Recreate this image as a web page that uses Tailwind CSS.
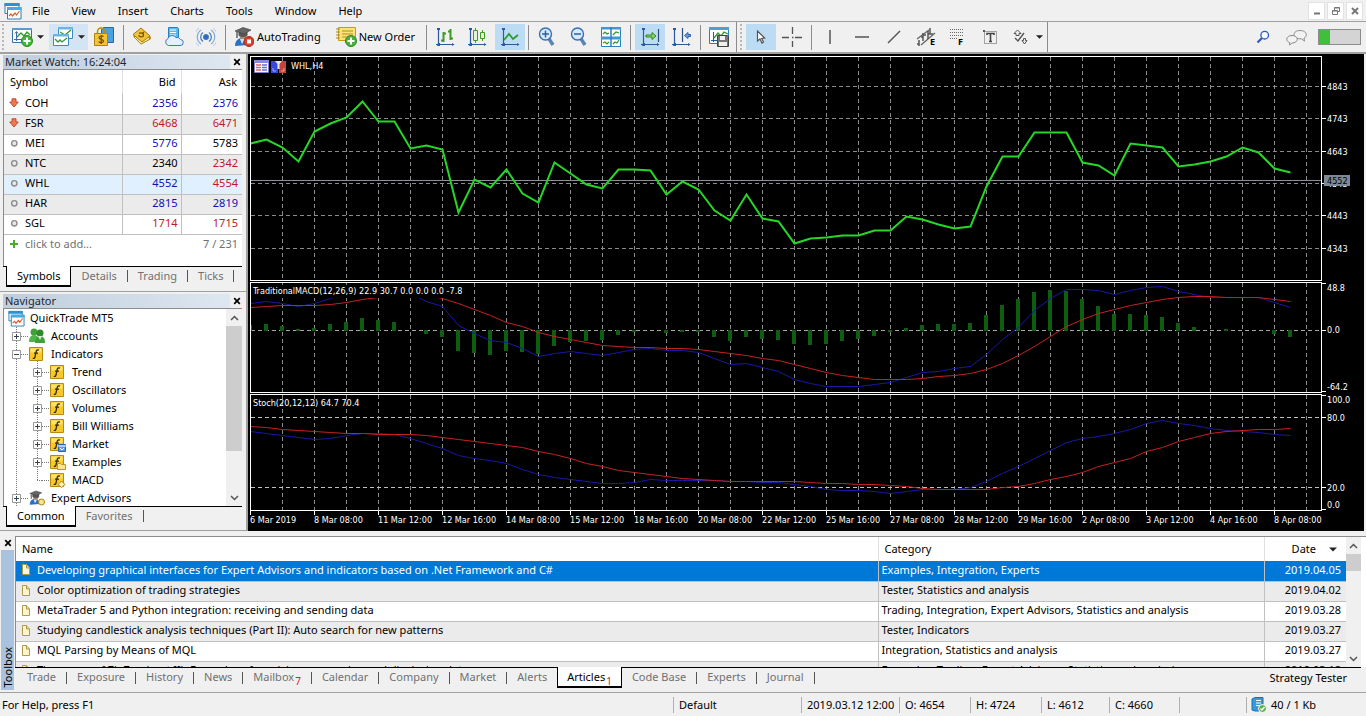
<!DOCTYPE html>
<html lang="en">
<head>
    <meta charset="UTF-8">
    <meta name="viewport" content="width=device-width, initial-scale=1.0">
    <title>QuickTrade MT5</title>
    <script src="https://cdn.jsdelivr.net/npm/@tailwindcss/browser@4"></script>
</head>
<body class="h-screen flex flex-col overflow-hidden bg-[#f0f0f0] text-black text-[11px] leading-4 font-['Noto_Sans','Open_Sans',sans-serif]">

    <!-- Shared icons -->
    <svg class="hidden">
        <symbol id="i-app" viewBox="0 0 18 18">
            <path d="M1 1.500h14v10H1z" fill="#fff" stroke="#2b7fb8"/><path d="M.5 1h15v3H.5z" fill="#2f8fd0"/>
            <path d="M3.500 5.500h13.500v11.500H3.500z" fill="#fff" stroke="#2b7fb8"/><path d="M3 5h14.500v3H3z" fill="#49a9e0"/>
            <path d="M5 14l2-2 1.500 2 2.500-3 1.500 2 3-4" fill="none" stroke="#e0582a" stroke-width="1.200"/>
        </symbol>
        <symbol id="i-f" viewBox="0 0 14 14">
            <path d="M.5.5h13v13H.5z" fill="#f6c928" stroke="#b58a12"/><path d="M1.500 1.500h11v4h-11z" fill="#fde36a"/>
            <path d="M10 3.200c-1.600-.8-2.600 0-2.900 1.600L6 10c-.3 1.400-1 1.700-2.200 1.200M5 6.200h4" fill="none" stroke="#3a2c00" stroke-width="1.300"/>
        </symbol>
        <symbol id="i-doc" viewBox="0 0 8 11">
            <path d="M.5.5h4L7.500 4v6.500h-7z" fill="#fdf6d0" stroke="#b09a4a"/><path d="M4.500.5V4h3" fill="#e9d68a" stroke="#b09a4a"/>
        </symbol>
        <symbol id="i-expert" viewBox="0 0 20 20">
            <path d="M1 19c0-5 3-8 7-8s6 3 6 7z" fill="#2b6fc0"/><path d="M6 12l2 5 3-5z" fill="#cfe6ff"/>
            <circle cx="9" cy="8.500" r="3.500" fill="#b08a68"/><path d="M4.500 4.500v4c3 2 6 2 9 0v-4z" fill="#555"/>
            <path d="M1 4l8-3.500L17 3l-7 4z" fill="#666" stroke="#3a3a3a" stroke-width=".6"/><path d="M3 5v6" stroke="#555" stroke-width="1.400"/>
        </symbol>
        <symbol id="i-down" viewBox="0 0 10 10"><path d="M3 .8h4v3.200h2.300L5 9 .7 4H3z" fill="#f07a50" stroke="#b8442a" stroke-width=".9"/></symbol>
        <symbol id="i-dot" viewBox="0 0 10 10"><circle cx="5.300" cy="5.300" r="2.700" fill="#e8e8e8" stroke="#8c8c8c" stroke-width="1.400"/></symbol>
        <symbol id="i-close" viewBox="0 0 8 8"><path d="M1.200 1.200l5.600 5.600M6.800 1.200L1.200 6.800" stroke="#000" stroke-width="1.700"/></symbol>
        <symbol id="i-caret" viewBox="0 0 8 4"><path d="M0 0h8L4 4z" fill="#222"/></symbol>
        <symbol id="i-axes" viewBox="0 0 20 20"><path d="M3.500 2v16M1 17.500h17" stroke="#2c5aa0" stroke-width="1.200" fill="none"/><path d="M2 1h3v2H2zM17 16l2.500 1.500L17 19zM3 16h2v3H2z" fill="#2c5aa0"/></symbol>
    </svg>

    <!-- Menu -->
    <header class="flex h-[22px] shrink-0 items-center border-b border-[#a0a0a0] pl-1">
        <svg class="size-[18px]"><use href="#i-app"/></svg>
        <nav class="flex flex-1 gap-[22px] pl-[10px]">
            <button>File</button>
            <button>View</button>
            <button>Insert</button>
            <button>Charts</button>
            <button>Tools</button>
            <button>Window</button>
            <button>Help</button>
        </nav>
        <div class="flex gap-[2px] pr-[3px]">
            <button aria-label="Minimize" class="flex h-[18px] w-[17px] items-center justify-center border border-[#e2e2e2] bg-white"><svg width="12" height="12"><path d="M3 8.500h6" stroke="#777" stroke-width="2"/></svg></button>
            <button aria-label="Restore" class="flex h-[18px] w-[17px] items-center justify-center border border-[#e2e2e2] bg-white"><svg width="12" height="12" fill="none" stroke="#777"><path d="M4.500 5V2.500h5v4H8M2.500 5.500h5v4h-5zM4.500 3h5M2.500 6h5"/></svg></button>
            <button aria-label="Close" class="flex h-[18px] w-[17px] items-center justify-center border border-[#e2e2e2] bg-white"><svg width="12" height="12"><path d="M3 3l6 6M9 3L3 9" stroke="#777" stroke-width="2"/></svg></button>
        </div>
    </header>

    <!-- Toolbar -->
    <div class="flex h-8 shrink-0 items-center border-b-2 border-[#a0a0a0]">
        <div class="ml-[2px] h-[26px] border-l-2 border-dotted border-[#b8b8b8]"></div>
        <button aria-label="New chart" class="ml-2 flex items-center gap-1">
            <svg width="21" height="20" viewBox="0 0 21 20"><path d="M.5 1.500h19v14H.5z" fill="#fff" stroke="#3a6ea8"/><path d="M0 1h20v2H0z" fill="#5b9bd0"/><path d="M4.500 5v9M2 12.500h14M3 6.500l1.500-2L6 6.500" fill="none" stroke="#3a6ea8"/><path d="M5 10l4-4 3 3 3-4 3 3" fill="none" stroke="#2e9a2e" stroke-width="1.300"/><circle cx="15" cy="14" r="5.500" fill="#49b13c" stroke="#2c8a24"/><path d="M15 10.500v7M11.500 14h7" stroke="#fff" stroke-width="2"/></svg>
            <svg class="h-1 w-[7px]"><use href="#i-caret"/></svg>
        </button>
        <button aria-label="Profiles" class="ml-[5px] flex h-[26px] w-[39px] items-center justify-center gap-1 bg-[#d3e5f5]">
            <svg width="21" height="20" viewBox="0 0 21 20"><path d="M5.500.5h14v11h-14z" fill="#fff" stroke="#3a8ac0"/><path d="M5 0h15v2.500H5z" fill="#6db4e4"/><path d="M7 5l5 3 6-5" fill="none" stroke="#2e9a2e" stroke-width="1.300"/><path d="M.5 7.500h15v11H.5z" fill="#fff" stroke="#3a8ac0"/><path d="M0 7h16v2.500H0z" fill="#6db4e4"/><path d="M2 12l3 3 2-2 2 2 5-4" fill="none" stroke="#2e9a2e" stroke-width="1.300"/></svg>
            <svg class="h-1 w-[7px]"><use href="#i-caret"/></svg>
        </button>
        <button aria-label="Market" class="ml-[6px]"><svg width="20" height="20" viewBox="0 0 20 20"><path d="M7.500 2.500l2-2h10v15h-12z" fill="#4d9fe0" stroke="#2268a8"/><path d="M3.500 7V4.500a3.500 3.500 0 017 0V7" fill="none" stroke="#b58a12" stroke-width="1.500"/><path d="M.5 6.500h13v12H.5z" fill="#f3c52f" stroke="#b0820e"/><path d="M9.500 9.700C8.500 8.600 5 8.600 5 10.700c0 2 4.600 1.200 4.600 3.400 0 2-3.900 2-5 .6M7.200 8v9" fill="none" stroke="#7a4a00" stroke-width="1.200"/></svg></button>
        <div class="ml-[9px] h-[25px] border-l border-[#8c8c8c]"></div>
        <button aria-label="MetaEditor" class="ml-2"><svg width="20" height="20" viewBox="0 0 20 20"><path d="M1 9l8 8.500 10-5.500v-2L10 2z" fill="#c18c12"/><path d="M2 10l7 7 9-5-7-7z" fill="#fff3b5" stroke="#a67a10" stroke-width=".8"/><path d="M1 7.500L9 1l9 8-8 6z" fill="#f0c33a" stroke="#a67a10"/><path d="M7 6.500c2-1.500 5 0 4.500 2S8 10 6.500 8.500M11 5l1 1" fill="none" stroke="#7a5200" stroke-width="1.300"/></svg></button>
        <button aria-label="Virtual hosting" class="ml-3"><svg width="20" height="20" viewBox="0 0 20 20"><path d="M4.500.5h9l1 1v13h-10z" fill="#5ab8ea" stroke="#2a80b8"/><path d="M6 3h6M6 5.500h6M6 8h6" stroke="#fff"/><path d="M4.500 18.500a3.700 3.700 0 01-.5-7 4.500 4.500 0 018-1 4 4 0 014.500 2 3 3 0 01-.5 6z" fill="#e6f1fd" stroke="#3a76c4"/></svg></button>
        <button aria-label="Signals" class="ml-3"><svg width="20" height="20" viewBox="0 0 20 20" fill="none" stroke="#4a80bc"><circle cx="10" cy="10" r="2.600" fill="#2a6ac8"/><path d="M7 5.500a5.500 5.500 0 000 9M13 5.500a5.500 5.500 0 010 9" stroke-width="1.300"/><path d="M5 3a8.500 8.500 0 000 14M15 3a8.500 8.500 0 010 14" stroke="#83aad6" stroke-width="1.200"/><path d="M3 1a11 11 0 000 18M17 1a11 11 0 010 18" stroke="#b3cae6"/></svg></button>
        <div class="ml-[9px] h-[25px] border-l border-[#8c8c8c]"></div>
        <button class="ml-2 flex items-center gap-[3px]">
            <svg width="20" height="20" viewBox="0 0 20 20"><use href="#i-expert"/><circle cx="15" cy="14.500" r="5" fill="#d8402a" stroke="#a82a18"/><path d="M13 12.500h4v4h-4z" fill="#fff"/></svg>
            AutoTrading
        </button>
        <button class="ml-[15px] flex items-center gap-[2px]">
            <svg width="21" height="20" viewBox="0 0 21 20"><path d="M2.500.5h17v13h-17z" fill="#ffe37a" stroke="#c69a1c"/><path d="M0 2h4M0 5h4M0 8h4M0 11h4" stroke="#a8883a"/><path d="M6 4h11M6 7h11M6 10h8" stroke="#b08a20"/><circle cx="15" cy="14" r="5.500" fill="#49b13c" stroke="#2c8a24"/><path d="M15 10.500v7M11.500 14h7" stroke="#fff" stroke-width="2"/></svg>
            New Order
        </button>
        <div class="ml-[11px] h-[25px] border-l border-[#8c8c8c]"></div>
        <button aria-label="Bar chart" class="ml-2"><svg width="20" height="20"><use href="#i-axes"/><path d="M8.500 5v10M6 13.500h3M8 6.500h3M15.500 2v11M13 4.500h3M15 11.500h3" stroke="#3f9a20" stroke-width="2"/></svg></button>
        <button aria-label="Candlesticks" class="ml-3"><svg width="20" height="20"><use href="#i-axes"/><path d="M8.500 1v15M15.500 3v11" stroke="#3f9a20"/><path d="M6.500 3.500h4v10h-4zM13.500 5.500h4v6h-4z" fill="#e6f6dc" stroke="#3f9a20"/></svg></button>
        <button aria-label="Line chart" class="ml-2 flex h-[26px] w-[30px] items-center justify-center bg-[#bcdcf4]"><svg width="20" height="20"><use href="#i-axes"/><path d="M4 13l5-6 4 5 5-4" fill="none" stroke="#2e9a2e" stroke-width="1.800"/></svg></button>
        <div class="ml-[3px] h-[25px] border-l border-[#8c8c8c]"></div>
        <button aria-label="Zoom in" class="ml-[9px]"><svg width="20" height="20"><path d="M10.500 11l4.500 7" stroke="#5c82b4" stroke-width="3.400"/><circle cx="7.500" cy="7" r="6" fill="#d9ebfa" stroke="#3570b8" stroke-width="1.400"/><path d="M4 7h7M7.500 3.500v7" stroke="#2860a8" stroke-width="1.500"/></svg></button>
        <button aria-label="Zoom out" class="ml-3"><svg width="20" height="20"><path d="M10.500 11l4.500 7" stroke="#5c82b4" stroke-width="3.400"/><circle cx="7.500" cy="7" r="6" fill="#d9ebfa" stroke="#3570b8" stroke-width="1.400"/><path d="M4 7h7" stroke="#2860a8" stroke-width="1.500"/></svg></button>
        <button aria-label="Tile windows" class="ml-[11px]"><svg width="20" height="20"><path d="M.5.5h19v19H.5z" fill="#fff" stroke="#2a80c0"/><path d="M0 0h20v2.500H0zM0 9.500h20v3H0z" fill="#3f97d8"/><path d="M10 0v20" stroke="#2a80c0" stroke-width="1.500"/><path d="M2 7l2-2 2 2 2-1M12 8l3-3 3 1M2 16l2-1 2 2 2-2M12 17l2-2 2 1 2-3" fill="none" stroke="#2e9a2e" stroke-width="1.200"/></svg></button>
        <div class="ml-[9px] h-[25px] border-l border-[#8c8c8c]"></div>
        <button aria-label="Auto scroll" class="ml-1 flex h-[26px] w-[30px] items-center justify-center bg-[#bcdcf4]"><svg width="20" height="20"><use href="#i-axes"/><path d="M18.500 2v13" stroke="#2c4a7a" stroke-width="1.200"/><path d="M6 8h6V5.500l4 3.500-4 3.500V10H6z" fill="#8fd06a" stroke="#2e8a1e"/></svg></button>
        <button aria-label="Chart shift" class="ml-[6px]"><svg width="20" height="20"><use href="#i-axes"/><path d="M11.500 1v14" stroke="#2c4a7a" stroke-width="1.200"/><path d="M19.500 7.500h-2.500V5.500L13.500 8.500l3.500 3v-2h2.500z" fill="#6aa0e8" stroke="#2a60b0"/></svg></button>
        <div class="ml-[9px] h-[25px] border-l border-[#8c8c8c]"></div>
        <button aria-label="Templates" class="ml-2"><svg width="20" height="20"><path d="M.5.5h19v16H.5z" fill="#fff" stroke="#2a80b8"/><path d="M0 0h20v3H0z" fill="#4aa0d8"/><path d="M4.500 5v10M2 13.500h8" stroke="#2c5aa0"/><path d="M5 11l4-5 3 3 3-4 4 2" fill="none" stroke="#2e9a2e" stroke-width="1.300"/><path d="M8.500 8.500h10l1 1v10h-11z" fill="#777" stroke="#444"/><path d="M11 9h5v4h-5zM10 15h8v4h-8z" fill="#f0f0f0"/></svg></button>
        <div class="ml-[7px] h-[30px] border-l border-[#8c8c8c]"></div>
        <div class="ml-[3px] h-[26px] border-l-2 border-dotted border-[#b8b8b8]"></div>
        <button aria-label="Cursor" class="ml-1 flex h-[26px] w-[30px] items-center justify-center bg-[#bcdcf4]"><svg width="10" height="14"><path d="M1.500 1v10l2.500-2 2 4 1.500-1-1.800-3.500 3-.5z" fill="#fff" stroke="#555" stroke-width="1.200"/></svg></button>
        <button aria-label="Crosshair" class="ml-[6px]"><svg width="20" height="20"><path d="M10.500 0v7M10.500 14v6M0 10.500h7M13 10.500h7M10 10.500h1.500" stroke="#555" stroke-width="1.300"/></svg></button>
        <div class="ml-[9px] h-[25px] border-l border-[#8c8c8c]"></div>
        <button aria-label="Vertical line" class="ml-2"><svg width="20" height="20"><path d="M10 3v14" stroke="#555" stroke-width="1.500"/></svg></button>
        <button aria-label="Horizontal line" class="ml-3"><svg width="20" height="20"><path d="M3 10h14" stroke="#555" stroke-width="1.500"/></svg></button>
        <button aria-label="Trendline" class="ml-3"><svg width="20" height="20"><path d="M4 16L16 4" stroke="#555" stroke-width="1.500"/></svg></button>
        <button aria-label="Equidistant channel" class="ml-3"><svg width="22" height="22"><path d="M1 13L13 4M5 19L19 7" stroke="#666" stroke-width="1.300"/><path d="M3 20v-6M1 18h2M7 15V7M5 11h2M7 9h3M12 13V5M14 2v6M12 8h5" stroke="#555" stroke-width="1.500"/><path d="M14 12h7v8h-7z" fill="#f0f0f0"/><text x="14" y="19" class="text-[9px] font-bold">E</text></svg></button>
        <button aria-label="Fibonacci" class="ml-[10px]"><svg width="20" height="22"><path d="M2 3.500h13M2 6.500h13M2 9.500h13M2 12.500h7" stroke="#666" stroke-dasharray="1 1" stroke-width="1.200"/><text x="10" y="19" class="text-[9px] font-bold">F</text></svg></button>
        <button aria-label="Text label" class="ml-3"><svg width="20" height="20"><path d="M4.500 4.500h12v12h-12z" fill="none" stroke="#555" stroke-dasharray="1 1"/><path d="M3 3h2v2H3z" fill="#555"/><path d="M7 8V6.500h7V8M10.500 6.500v8M9 14.500h3" fill="none" stroke="#444" stroke-width="1.600"/></svg></button>
        <button aria-label="Objects" class="ml-3 flex items-center gap-[6px]">
            <svg width="18" height="20"><path d="M2 6.500L5.500 3 9 6.500H7v2H4v-2z" fill="none" stroke="#555"/><path d="M3 11l3 3 6-8" fill="none" stroke="#555" stroke-width="1.400"/><path d="M10 13.500h1.500v-2h2v2H15L12.500 17z" fill="none" stroke="#555"/></svg>
            <svg class="h-1 w-[7px]"><use href="#i-caret"/></svg>
        </button>
        <div class="ml-1 h-[30px] border-l border-[#8c8c8c]"></div>
        <div class="ml-auto flex items-center pr-[5px]">
            <button aria-label="Search"><svg width="14" height="14"><path d="M6 8l-4.500 4.500" stroke="#2a5ac0" stroke-width="2.200"/><circle cx="8.700" cy="5.200" r="3.800" fill="#f4f9ff" stroke="#2a5ac0" stroke-width="1.300"/></svg></button>
            <button aria-label="Chat" class="ml-4"><svg width="21" height="17" fill="#f2f2f2" stroke="#8a8a8a"><path d="M14 1.500c3.500 0 6.300 1.700 6.300 4.200 0 1.600-1 2.700-2.300 3.400l.5 3-3-2.300C11 10 8 8.500 8 5.700c0-2.500 2.500-4.200 6-4.200z"/><path d="M6 6.500c3 0 5.300 1.500 5.300 3.700S9 14 6 14l-2.500 2 .2-2.500C2 13 .8 11.800.8 10.200.800 8 3 6.500 6 6.500z"/></svg></button>
            <div class="ml-[11px] h-4 w-[43px] border border-[#8c8c8c] bg-[#d4d4d4]"><div class="h-full w-[11px] bg-[#3fbf3a]"></div></div>
        </div>
    </div>

    <main class="flex min-h-0 flex-1">
        <aside class="flex w-[248px] shrink-0 flex-col border-r-2 border-[#a0a0a0] border-b border-b-[#a0a0a0]">
            <!-- Market Watch -->
            <section class="h-[238px] border-b border-[#a0a0a0] pt-px pr-1 pl-[3px]">
                <div class="-mr-[2px] flex h-[14px] items-center bg-linear-to-r from-[#bfcddb] to-[#dfe9f3] pl-[2px]">
                    <h2 class="flex-1 text-[#1c2733]">Market Watch: 16:24:04</h2>
                    <button aria-label="Close Market Watch" class="flex h-full w-[14px] items-center justify-center bg-[#f0f0f0]"><svg class="size-2"><use href="#i-close"/></svg></button>
                </div>
                <div class="h-[197px] border-t border-l border-[#8c8c8c] bg-white">
                    <table class="w-full table-fixed border-collapse">
                        <thead>
                            <tr class="h-6">
                                <th class="pl-[6px] text-left font-normal">Symbol</th>
                                <th class="w-[59px] border-l border-[#e0e0e0] pr-[5px] text-right font-normal">Bid</th>
                                <th class="w-[61px] border-l border-[#e0e0e0] pr-[5px] text-right font-normal">Ask</th>
                            </tr>
                        </thead>
                        <tbody id="quotes"></tbody>
                    </table>
                    <div class="flex h-5 items-center pr-[4px] pb-[2px] pl-[5px] text-[#707070]">
                        <svg width="10" height="10"><path d="M5 1v8M1 5h8" stroke="#4aa82a" stroke-width="2"/></svg>
                        <input type="text" aria-label="Add symbol" placeholder="click to add..." class="ml-[6px] w-24 flex-1 outline-none placeholder:text-[#707070]">
                        <span>7 / 231</span>
                    </div>
                </div>
                <div class="flex h-5 items-start border-t border-black pl-[3px] text-[#707070]">
                    <button class="-mt-px h-[21px] border-x border-b-2 border-black bg-white px-[10px] text-black">Symbols</button>
                    <button class="mt-px px-[10px]">Details</button><i class="mt-[3px] h-3 border-l border-[#555]"></i>
                    <button class="mt-px px-[10px]">Trading</button><i class="mt-[3px] h-3 border-l border-[#555]"></i>
                    <button class="mt-px px-[10px]">Ticks</button><i class="mt-[3px] h-3 border-l border-[#555]"></i>
                </div>
            </section>

            <!-- Navigator -->
            <section class="flex min-h-0 flex-1 flex-col pt-[2px] pr-1 pl-[3px]">
                <div class="-mr-[2px] flex h-[14px] shrink-0 items-center bg-linear-to-r from-[#bfcddb] to-[#dfe9f3] pl-[2px]">
                    <h2 class="flex-1 text-[#1c2733]">Navigator</h2>
                    <button aria-label="Close Navigator" class="flex h-full w-[14px] items-center justify-center bg-[#f0f0f0]"><svg class="size-2"><use href="#i-close"/></svg></button>
                </div>
                <div class="flex min-h-0 flex-1 border-t border-l border-[#8c8c8c] bg-white">
                    <ul class="relative flex-1 overflow-hidden" id="tree">
                        <li class="absolute top-4 bottom-0 left-3 border-l border-dotted border-[#777]"></li>
                        <li class="absolute top-[50px] left-[33px] h-[121px] border-l border-dotted border-[#777]"></li>
                        <li class="relative flex h-[18px] items-center gap-[5px] pl-1"><svg class="size-[17px]"><use href="#i-app"/></svg>QuickTrade MT5</li>
                    </ul>
                    <div class="flex w-4 flex-col bg-[#f0f0f0]">
                        <button aria-label="Scroll up" class="flex h-[17px] items-center justify-center"><svg width="9" height="6"><path d="M1 5l3.500-3.500L8 5" fill="none" stroke="#555" stroke-width="1.500"/></svg></button>
                        <div class="h-[125px] bg-[#cdcdcd]"></div>
                        <button aria-label="Scroll down" class="mt-auto flex h-[17px] items-center justify-center"><svg width="9" height="6"><path d="M1 1l3.500 3.500L8 1" fill="none" stroke="#555" stroke-width="1.500"/></svg></button>
                    </div>
                </div>
                <div class="flex h-6 shrink-0 items-start border-t border-black pl-[3px] text-[#707070]">
                    <button class="-mt-px h-[21px] border-x border-b-2 border-black bg-white px-[10px] text-black">Common</button>
                    <button class="mt-px px-[10px]">Favorites</button><i class="mt-[3px] h-3 border-l border-[#555]"></i>
                </div>
            </section>
        </aside>

        <!-- Chart window -->
        <section class="flex min-w-0 flex-1 flex-col gap-px bg-black pt-[2px] pl-[2px] font-['DejaVu_Sans_Condensed','DejaVu_Sans',sans-serif] text-[9px] text-white">
            <div class="flex min-h-0 flex-1">
                <div class="relative min-w-0 flex-1 border border-white">
                    <svg id="price" class="block h-full w-full"></svg>
                    <div class="absolute top-px left-[3px] flex items-center gap-[2px]">
                        <svg width="15" height="13"><path d="M.5.5h14v12H.5z" fill="#fff" stroke="#8080d0"/><path d="M0 0h15v3H0z" fill="#8a8ae0"/><path d="M2 5h5M2 7.500h5M2 10h5" stroke="#e06a5a" stroke-width="1.400"/><path d="M8 5h5M8 7.500h5M8 10h5" stroke="#6a6ae0" stroke-width="1.400"/></svg>
                        <svg width="15" height="13"><path d="M0 1h5l2 3v9H0z" fill="#3a48e0"/><path d="M8 4l2-3h5v12H8z" fill="#c8423c"/><path d="M4 1h7L8.500 4v5h-2V4z" fill="#e8e8f4"/><path d="M2 8v3h3M13 8v3h-3" stroke="#fff" stroke-opacity=".5" fill="none"/></svg>
                        <span class="ml-[3px]">WHL,H4</span>
                    </div>
                </div>
                <svg id="priceAxis" class="h-full w-[42px] shrink-0"></svg>
            </div>
            <div class="flex h-[111px] shrink-0">
                <div class="relative min-w-0 flex-1 border border-white">
                    <svg id="macd" class="block h-full w-full"></svg>
                    <span class="absolute top-[2px] left-[2px] bg-black pr-1 leading-[13px]">TraditionalMACD(12,26,9) 22.9 30.7 0.0 0.0 0.0 -7.8</span>
                </div>
                <svg id="macdAxis" class="h-full w-[42px] shrink-0"></svg>
            </div>
            <div class="flex h-[117px] shrink-0">
                <div class="relative min-w-0 flex-1 border border-white">
                    <svg id="stoch" class="block h-full w-full"></svg>
                    <span class="absolute top-[2px] left-[2px] leading-[13px]">Stoch(20,12,12) 64.7 70.4</span>
                </div>
                <svg id="stochAxis" class="h-full w-[42px] shrink-0"></svg>
            </div>
            <div id="times" class="-mt-px flex h-5 shrink-0 leading-[10px]"></div>
        </section>
        <div class="w-[2px] shrink-0 bg-[#f0f0f0]"></div>
    </main>

    <!-- Toolbox -->
    <section class="flex h-[161px] shrink-0 pt-[5px]">
        <div class="flex w-[15px] shrink-0 flex-col items-center">
            <button aria-label="Close Toolbox" class="flex h-[14px] items-center"><svg class="size-2"><use href="#i-close"/></svg></button>
            <div class="mb-[2px] w-[13px] flex-1 bg-[#a9c2de] pb-[2px] text-left leading-[13px] [writing-mode:sideways-lr]">Toolbox</div>
        </div>
        <div class="min-w-0 flex-1">
            <div class="flex h-[131px] border-t border-l border-[#8c8c8c] bg-white">
                <div class="min-w-0 flex-1 overflow-hidden">
                    <table class="w-full table-fixed border-collapse">
                        <thead>
                            <tr class="h-6">
                                <th class="pl-[6px] text-left font-normal">Name</th>
                                <th class="w-[386px] border-l border-[#e0e0e0] pl-[6px] text-left font-normal">Category</th>
                                <th class="w-[82px] border-l border-[#e0e0e0] pr-[9px] font-normal"><span class="flex items-center justify-end gap-[13px]">Date <svg class="h-[5px] w-2"><use href="#i-caret"/></svg></span></th>
                            </tr>
                        </thead>
                        <tbody id="articles"></tbody>
                    </table>
                </div>
                <div class="mr-[5px] flex w-[15px] flex-col bg-[#f0f0f0]">
                    <button aria-label="Scroll up" class="flex h-[17px] items-center justify-center"><svg width="9" height="6"><path d="M1 5l3.500-3.500L8 5" fill="none" stroke="#555" stroke-width="1.500"/></svg></button>
                    <div class="h-[17px] bg-[#cdcdcd]"></div>
                    <button aria-label="Scroll down" class="mt-auto flex h-[17px] items-center justify-center"><svg width="9" height="6"><path d="M1 1l3.500 3.500L8 1" fill="none" stroke="#555" stroke-width="1.500"/></svg></button>
                </div>
            </div>
            <div class="mr-[5px] flex h-[22px] items-start border-t border-black pl-[2px] text-[#707070]">
                <button class="mt-px px-[10px]">Trade</button><i class="mt-1 h-3 border-l border-[#555]"></i>
                <button class="mt-px px-[10px]">Exposure</button><i class="mt-1 h-3 border-l border-[#555]"></i>
                <button class="mt-px px-[10px]">History</button><i class="mt-1 h-3 border-l border-[#555]"></i>
                <button class="mt-px px-[10px]">News</button><i class="mt-1 h-3 border-l border-[#555]"></i>
                <button class="mt-px flex px-[10px]">Mailbox<span class="ml-px pt-1 text-[10px] text-[#d02030]">7</span></button><i class="mt-1 h-3 border-l border-[#555]"></i>
                <button class="mt-px px-[10px]">Calendar</button><i class="mt-1 h-3 border-l border-[#555]"></i>
                <button class="mt-px px-[10px]">Company</button><i class="mt-1 h-3 border-l border-[#555]"></i>
                <button class="mt-px px-[10px]">Market</button><i class="mt-1 h-3 border-l border-[#555]"></i>
                <button class="mt-px px-[10px]">Alerts</button>
                <button class="-mt-px flex h-[21px] border-x border-b-2 border-black bg-white px-[9px] pt-[2px] text-black">Articles<span class="ml-px pt-1 text-[10px] text-[#d02030]">1</span></button>
                <button class="mt-px px-[10px]">Code Base</button><i class="mt-1 h-3 border-l border-[#555]"></i>
                <button class="mt-px px-[10px]">Experts</button><i class="mt-1 h-3 border-l border-[#555]"></i>
                <button class="mt-px px-[10px]">Journal</button><i class="mt-1 h-3 border-l border-[#555]"></i>
                <button class="mt-[2px] mr-[14px] ml-auto text-black">Strategy Tester</button>
            </div>
        </div>
    </section>

    <!-- Status bar -->
    <footer class="flex h-6 shrink-0 items-center border-t border-[#a0a0a0] pt-px pl-[2px]">
        <span class="flex-1">For Help, press F1</span>
        <span class="w-32 border-l border-[#b0b0b0] pl-[5px]">Default</span>
        <span class="w-[98px] border-l border-[#b0b0b0] pl-[5px] whitespace-nowrap">2019.03.12 12:00</span>
        <span class="w-[71px] border-l border-[#b0b0b0] pl-[5px]">O: 4654</span>
        <span class="w-[71px] border-l border-[#b0b0b0] pl-[5px]">H: 4724</span>
        <span class="w-[68px] border-l border-[#b0b0b0] pl-[5px]">L: 4612</span>
        <span class="w-[70px] border-l border-[#b0b0b0] pl-[5px]">C: 4660</span>
        <span class="h-4 w-[67px] border-l border-[#b0b0b0]"></span>
        <span class="flex w-[120px] items-center gap-1 border-l border-[#b0b0b0] pl-1">
            <svg width="16" height="16"><path d="M1 2l3-1.500h8V14H4l-3-1z" fill="#3a9ad8" stroke="#1c6ca8"/><path d="M5 3.500h5M5 6h5M5 8.500h5" stroke="#fff"/><circle cx="11.500" cy="11.500" r="4" fill="#5cb04a" stroke="#fff"/><path d="M9.500 11.500l1.500 1.500 2.500-3" fill="none" stroke="#fff" stroke-width="1.300"/></svg>
            40 / 1 Kb
        </span>
    </footer>

    <script>
        const blue = 'text-[#1010b8]', red = 'text-[#c01828]', black = 'text-black';
        const quotes = [
            ['COH', 'down', 2356, blue, 2376, blue],
            ['FSR', 'down', 6468, red, 6471, red],
            ['MEI', 'dot', 5776, blue, 5783, black],
            ['NTC', 'dot', 2340, black, 2342, red],
            ['WHL', 'dot', 4552, blue, 4554, red],
            ['HAR', 'dot', 2815, blue, 2819, blue],
            ['SGL', 'dot', 1714, red, 1715, red],
        ];
        document.getElementById('quotes').innerHTML = quotes.map(([name, icon, bid, bidColor, ask, askColor], i) => {
            const bg = name === 'WHL' ? 'bg-[#e0f0ff]' : i % 2 ? 'bg-[#ebebeb]' : 'bg-white';
            return `<tr class="h-5 border-b border-[#c0c0c0] ${bg}">
                <td class="pb-[2px] pl-[5px]"><span class="flex items-center gap-[6px]"><svg class="size-[10px]"><use href="#i-${icon}"/></svg>${name}</span></td>
                <td class="border-l border-[#c0c0c0] pr-[3px] pb-[2px] text-right ${bidColor}">${bid}</td>
                <td class="border-l border-[#c0c0c0] pr-[4px] pb-[2px] text-right ${askColor}">${ask}</td>
            </tr>`;
        }).join('');

        const articles = [
            ['Developing graphical interfaces for Expert Advisors and indicators based on .Net Framework and C#', 'Examples, Integration, Experts', '2019.04.05'],
            ['Color optimization of trading strategies', 'Tester, Statistics and analysis', '2019.04.02'],
            ['MetaTrader 5 and Python integration: receiving and sending data', 'Trading, Integration, Expert Advisors, Statistics and analysis', '2019.03.28'],
            ['Studying candlestick analysis techniques (Part II): Auto search for new patterns', 'Tester, Indicators', '2019.03.27'],
            ['MQL Parsing by Means of MQL', 'Integration, Statistics and analysis', '2019.03.27'],
            ['The power of ZigZag (part II). Examples of receiving, processing and displaying data', 'Examples, Trading, Expert Advisors, Statistics and analysis', '2019.03.18'],
        ];
        document.getElementById('articles').innerHTML = articles.map(([name, category, date], i) => {
            const bg = i === 0 ? 'bg-[#0078d7] text-white' : i % 2 ? 'bg-[#ebebeb]' : 'bg-white';
            return `<tr class="h-5 border-b border-[#c0c0c0] whitespace-nowrap ${bg}">
                <td class="pb-[2px] pl-[6px]"><span class="flex items-center gap-[7px]"><svg class="h-[11px] w-2"><use href="#i-doc"/></svg>${name}</span></td>
                <td class="border-l border-[#c0c0c0] pb-[2px] pl-[3px]">${category}</td>
                <td class="border-l border-[#c0c0c0] pr-[5px] pb-[2px] text-right">${date}</td>
            </tr>`;
        }).join('');

        // Navigator tree
        const f = '<use href="#i-f" width="14" height="14" y="1"/>';
        const icons = {
            accounts: '<circle cx="5" cy="4" r="3.500" fill="#3fa03a"/><path d="M0 14c0-5 2-7 5-7s5 2 5 7z" fill="#4fb548"/><circle cx="11" cy="5" r="3.500" fill="#2e8a2a"/><path d="M6 15c0-5 2-7 5-7s5 2 5 7z" fill="#3fa03a"/><path d="M9 8l2 4 2-4" fill="#d8f0d0"/>',
            f: f,
            market: f + '<path d="M8.500 8.500h7v7h-7z" fill="#5a9ce8" stroke="#2a60b0"/><path d="M8 10h8M10 12l2 2 2-2" stroke="#fff" fill="none"/>',
            folder: f + '<path d="M7.500 9.500h3l1 1h4v5h-8z" fill="#fbe58a" stroke="#b8962a"/>',
            custom: f + '<path d="M11.500 9l3.500 3.500-3.500 3L8 12.500z" fill="#fff2b0" stroke="#a88418"/>',
            expert: '<use href="#i-expert" width="15" height="16"/><circle cx="12.500" cy="12" r="3" fill="#fbe58a" stroke="#a88418"/>',
        };
        const tree = [
            ['Accounts', 1, '+', 'accounts'], ['Indicators', 1, '-', 'f'], ['Trend', 2, '+', 'f'], ['Oscillators', 2, '+', 'f'],
            ['Volumes', 2, '+', 'f'], ['Bill Williams', 2, '+', 'f'], ['Market', 2, '+', 'market'], ['Examples', 2, '+', 'folder'],
            ['MACD', 2, '', 'custom'], ['Expert Advisors', 1, '+', 'expert'],
        ];
        document.getElementById('tree').innerHTML += tree.map(([label, level, sign, icon]) => {
            const box = sign
                ? `<svg width="9" height="9"><path d="M.5.5h8v8h-8z" fill="#fff" stroke="#999"/><path d="M2 4.500h5${sign === '+' ? 'M4.500 2v5' : ''}" stroke="#345"/></svg>`
                : '<i class="ml-1 w-[5px] border-t border-dotted border-[#777]"></i>';
            return `<li class="relative flex h-[18px] items-center ${level === 1 ? 'pl-2' : 'pl-[29px]'}">${box}<i class="w-[7px] border-t border-dotted border-[#777]"></i><svg class="ml-px" width="17" height="16">${icons[icon]}</svg><span class="ml-[5px]">${label}</span></li>`;
        }).join('');

        // Chart series, one value per bar, in pixels
        const STEP = 16;
        const price = [143,139,147,161,131,123,117,101,121,121,148,145,149,212,179,187,169,193,202,162,173,184,188,169,169,170,194,181,189,210,220,194,218,221,243,238,237,235,235,230,230,216,219,224,228,226,186,156,156,132,132,132,162,165,175,143,145,147,166,164,161,156,147,152,168,172];
        const hist = [5,6,4,1,2,6,8,12,10,8,0,-3,-6,-20,-22,-24,-20,-21,-23,-15,-11,-10,-9,-4,-1,0,-2,-1,-1,-6,-10,-6,-8,-9,-13,-14,-13,-10,-8,-5,-1,2,5,6,6,7,15,25,31,38,40,39,31,24,16,16,15,13,7,3,0,1,0,0,-3,-6];
        const macdMain = [303,301,303,306,303,298,292,288,286,288,293,301,306,325,333,340,342,348,356,353,351,353,355,352,349,348,350,350,352,358,364,363,367,371,379,383,386,386,386,384,382,377,372,371,368,366,354,339,327,310,298,289,289,290,294,290,287,286,291,294,297,297,297,297,302,307];
        const macdSignal = [307,306,305,305,305,304,302,299,297,293,292,295,298,303,309,315,322,326,332,336,339,342,345,346,347,347,348,348,349,351,353,355,358,360,364,368,372,375,377,379,379,379,378,376,375,373,369,363,355,346,336,326,319,313,309,305,302,299,297,296,296,297,297,297,299,301];
        const stochMain = [431,433,435,437,439,438,435,433,433,434,438,443,448,455,458,460,463,469,474,477,479,481,483,483,482,479,480,480,480,480,481,481,482,482,484,486,489,490,490,491,493,491,489,489,489,487,481,473,466,458,450,442,438,436,433,429,423,420,423,425,428,430,431,432,434,435];
        const stochSignal = [426,427,429,430,431,432,433,433,434,434,434,435,437,439,441,443,445,447,451,454,458,463,466,470,472,474,476,478,479,480,481,481,481,481,481,482,483,483,484,484,485,486,488,489,489,489,489,487,486,483,479,476,472,466,462,458,451,447,441,437,433,431,430,429,429,428];

        function grid(rows, top, color) {
            let out = '';
            for (let x = 31; x < 4000; x += 32) out += `<path d="M${x}.5 0V400" stroke="#8a8a8a" stroke-dasharray="4 3"/>`;
            rows.forEach(y => out += `<path d="M0 ${y - top}.5H4000" stroke="${color}" stroke-dasharray="4 3"/>`);
            return out;
        }
        function line(values, top, color, width) {
            return `<polyline points="${values.map((y, i) => (i * STEP - 1 + 0.5) + ',' + (y - top + 0.5)).join(' ')}" fill="none" stroke="${color}" stroke-width="${width}"/>`;
        }
        function axis(id, top, labels) {
            document.getElementById(id).innerHTML = labels.map(([y, text, tick]) =>
                `<path d="M0 ${tick - top}.5h4" stroke="#fff"/><text x="5" y="${y - top + 4}" fill="#fff">${text}</text>`).join('');
        }

        document.getElementById('price').innerHTML = grid([86, 118, 151, 183, 215, 248], 57, '#8a8a8a')
            + '<path d="M0 123.5H4000" stroke="#8e8e98"/>' + line(price, 57, '#26d826', 2);
        document.getElementById('macd').innerHTML = grid([330], 283, '#a8a8a8')
            + hist.map((h, i) => h ? `<rect x="${i * STEP - 3}" y="${h > 0 ? 47 - h : 47}" width="4" height="${Math.abs(h) + 1}" fill="#0e5e12"/>` : '').join('')
            + line(macdMain, 283, '#1818a8', 1) + line(macdSignal, 283, '#c82020', 1);
        document.getElementById('stoch').innerHTML = grid([417, 487], 395, '#c0c0c0')
            + line(stochMain, 395, '#1818a8', 1) + line(stochSignal, 395, '#c82020', 1);

        axis('priceAxis', 56, [[86, '4843', 86], [118, '4743', 118], [151, '4643', 151], [183, '4543', 183], [215, '4443', 215], [248, '4343', 248]]);
        document.getElementById('priceAxis').innerHTML += '<rect x="2" y="119" width="26" height="11" fill="#7c8894"/><text x="5" y="128" fill="#000">4552</text>';
        axis('macdAxis', 282, [[287, '48.8', 283], [329, '0.0', 330], [386, '-64.2', 391]]);
        axis('stochAxis', 394, [[399, '100.0', 395], [417, '80.0', 417], [487, '20.0', 487], [504, '0.0', 509]]);

        document.getElementById('times').innerHTML = ['6 Mar 2019', '8 Mar 08:00', '11 Mar 12:00', '12 Mar 16:00', '14 Mar 08:00', '15 Mar 12:00', '18 Mar 16:00', '20 Mar 08:00', '22 Mar 12:00', '25 Mar 16:00', '27 Mar 08:00', '28 Mar 12:00', '29 Mar 16:00', '2 Apr 08:00', '3 Apr 12:00', '4 Apr 16:00', '8 Apr 08:00']
            .map(t => `<div class="w-16 shrink-0 whitespace-nowrap"><div class="h-1 border-l border-white"></div>${t}</div>`).join('');
    </script>
</body>
</html>
